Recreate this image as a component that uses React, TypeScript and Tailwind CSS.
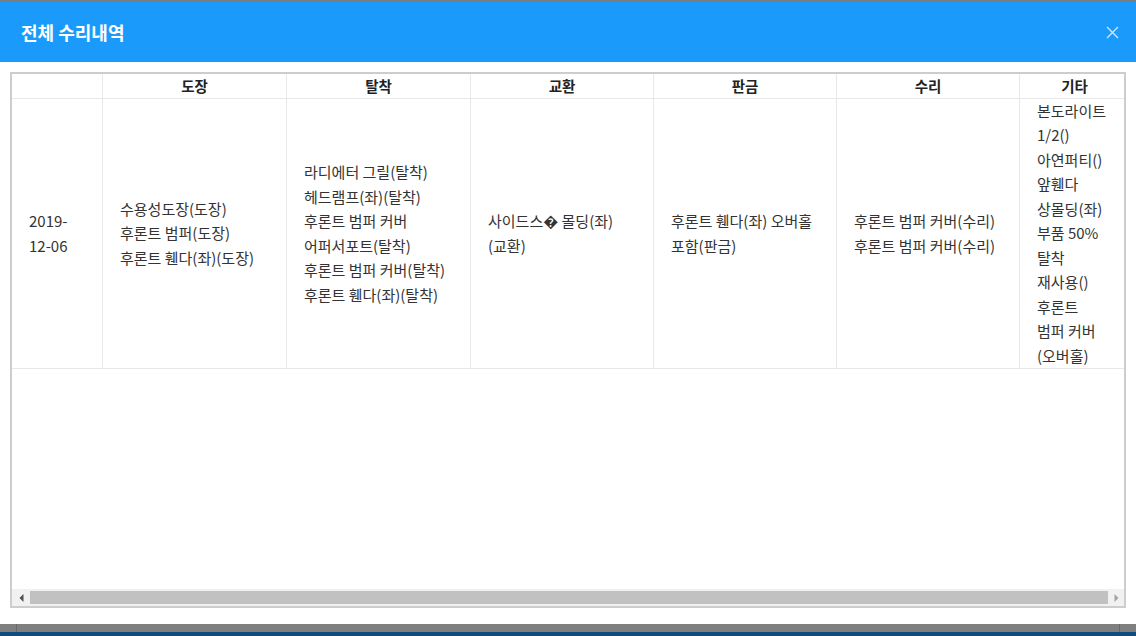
import React from "react";

const columns = ["", "도장", "탈착", "교환", "판금", "수리", "기타"];

const row: string[][] = [
  ["2019-", "12-06"],
  ["수용성도장(도장)", "후론트 범퍼(도장)", "후론트 휀다(좌)(도장)"],
  [
    "라디에터 그릴(탈착)",
    "헤드램프(좌)(탈착)",
    "후론트 범퍼 커버",
    "어퍼서포트(탈착)",
    "후론트 범퍼 커버(탈착)",
    "후론트 휀다(좌)(탈착)",
  ],
  ["사이드스\uFFFD 몰딩(좌)", "(교환)"],
  ["후론트 휀다(좌) 오버홀", "포함(판금)"],
  ["후론트 범퍼 커버(수리)", "후론트 범퍼 커버(수리)"],
  [
    "본도라이트",
    "1/2()",
    "아연퍼티()",
    "앞휀다",
    "상몰딩(좌)",
    "부품 50%",
    "탈착",
    "재사용()",
    "후론트",
    "범퍼 커버",
    "(오버홀)",
  ],
];

export default function App() {
  return (
    <div
      className="w-[1136px] h-[636px] flex flex-col bg-white overflow-hidden text-[#333]"
      style={{ fontFamily: '"Noto Sans CJK KR", "Noto Sans", sans-serif' }}
    >
      <div className="h-[2px] bg-[#7d7d7d]" />

      {/* Modal header */}
      <div className="h-[60px] bg-[#1a9bfc] flex items-center justify-between pl-[21px] pr-[17px]">
        <h1 className="text-[18px] font-bold text-white">전체 수리내역</h1>
        <svg width="13" height="13" viewBox="0 0 13 13" className="text-[#cfe7fd]">
          <path d="M1 1L12 12M12 1L1 12" stroke="currentColor" strokeWidth="1.4" />
        </svg>
      </div>

      {/* Modal body */}
      <div className="flex-1 px-[10px] pt-[10px] pb-[16px] flex">
        <div className="flex-1 border-2 border-[#cdcdcd] flex flex-col overflow-hidden">
          <div className="flex-1 overflow-hidden">
            <div className="grid grid-cols-[91px_184px_184px_183px_183px_183px_110px] w-[1118px] text-[15px]">
              {columns.map((c, i) => (
                <div
                  key={"h" + i}
                  className="h-[25px] border-b border-r border-[#e8e8e8] flex items-center justify-center font-bold text-[14.5px] text-[#222]"
                >
                  {c}
                </div>
              ))}
              {row.map((lines, i) => (
                <div
                  key={"c" + i}
                  className="h-[270px] border-b border-r border-[#e8e8e8] px-[17px] flex flex-col justify-center leading-[24.5px]"
                >
                  {lines.map((l, j) => (
                    <span key={j} className="whitespace-nowrap">
                      {l}
                    </span>
                  ))}
                </div>
              ))}
            </div>
          </div>

          {/* Horizontal scrollbar */}
          <div className="h-[17px] bg-[#f1f1f1] flex items-center">
            <div className="w-[18px] h-full flex items-center justify-center">
              <svg width="5" height="8" viewBox="0 0 5 8">
                <path d="M4.5 0L0.5 4L4.5 8Z" fill="#505050" />
              </svg>
            </div>
            <div className="flex-1 h-[13px] bg-[#c1c1c1]" />
            <div className="w-[16px] h-full flex items-center justify-center">
              <svg width="5" height="8" viewBox="0 0 5 8">
                <path d="M0.5 0L4.5 4L0.5 8Z" fill="#a3a3a3" />
              </svg>
            </div>
          </div>
        </div>
      </div>

      {/* Bottom edge of the page behind */}
      <div className="h-[8px] bg-[#7f7f7f] flex justify-between px-[16px]">
        <div className="w-px bg-[#6a6a6a]" />
        <div className="w-px bg-[#6a6a6a]" />
      </div>
      <div className="h-[4px] bg-[#0f4b7d]" />
    </div>
  );
}
